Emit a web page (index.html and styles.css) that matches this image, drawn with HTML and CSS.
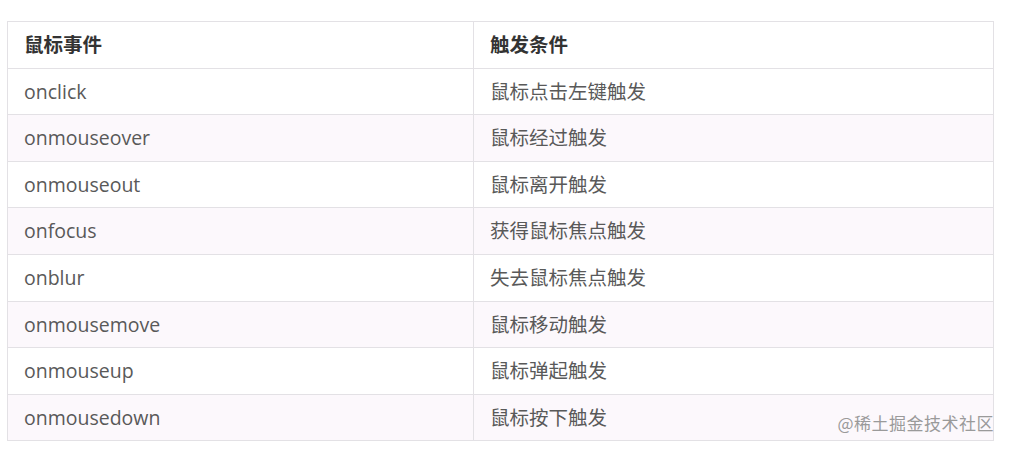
FILE: index.html
```html
<!DOCTYPE html>
<html lang="zh">
<head>
<meta charset="utf-8">
<link rel="stylesheet" href="styles.css">
</head>
<body>
<div class="page">
  <table class="events">
    <thead>
      <tr><th>鼠标事件</th><th>触发条件</th></tr>
    </thead>
    <tbody>
      <tr><td>onclick</td><td>鼠标点击左键触发</td></tr>
      <tr><td>onmouseover</td><td>鼠标经过触发</td></tr>
      <tr><td>onmouseout</td><td>鼠标离开触发</td></tr>
      <tr><td>onfocus</td><td>获得鼠标焦点触发</td></tr>
      <tr><td>onblur</td><td>失去鼠标焦点触发</td></tr>
      <tr><td>onmousemove</td><td>鼠标移动触发</td></tr>
      <tr><td>onmouseup</td><td>鼠标弹起触发</td></tr>
      <tr><td>onmousedown</td><td>鼠标按下触发</td></tr>
    </tbody>
  </table>
  <div class="watermark">@稀土掘金技术社区</div>
</div>
</body>
</html>
```
FILE: styles.css
```css
html, body {
  margin: 0;
  padding: 0;
  background: #ffffff;
}
.page {
  position: relative;
  width: 1010px;
  height: 451px;
  padding: 21px 0 0 7px;
  box-sizing: border-box;
  font-family: "Open Sans", "Noto Sans CJK SC", sans-serif;
}
.events {
  border-collapse: collapse;
  width: 987px;
  table-layout: fixed;
}
.events th,
.events td {
  border: 1px solid #e3e1e5;
  height: 46.6px;
  padding: 0 0 0 16px;
  text-align: left;
  vertical-align: middle;
  font-size: 19.5px;
  box-sizing: border-box;
  line-height: 1;
}
.events th:first-child,
.events td:first-child {
  width: 466px;
}
.events th {
  font-weight: bold;
  color: #333333;
}
.events td {
  color: #595959;
}
.events tbody tr:nth-child(even) {
  background: #fcf8fc;
}
.watermark {
  position: absolute;
  right: 16px;
  bottom: 16px;
  font-family: "Noto Sans CJK SC", sans-serif;
  font-size: 17px;
  color: #9a9a9a;
  letter-spacing: 0.5px;
}
```
